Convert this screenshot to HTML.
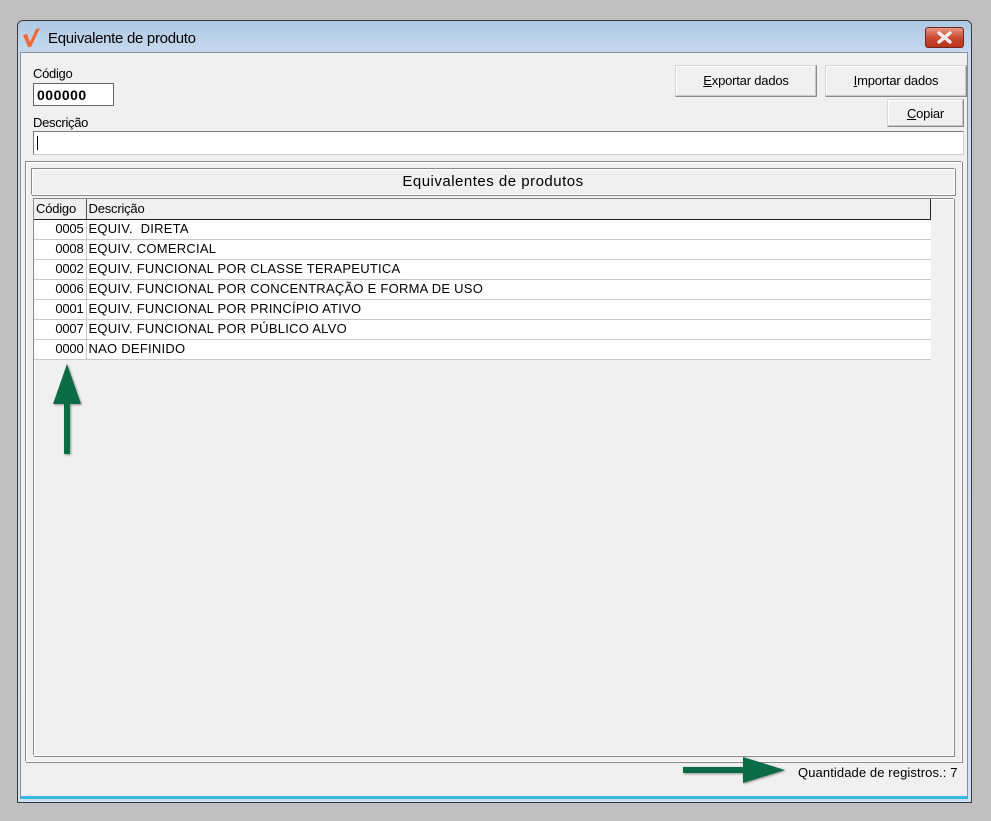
<!DOCTYPE html>
<html><head><meta charset="utf-8">
<style>
*{box-sizing:border-box;margin:0;padding:0}
body{width:991px;height:821px;background:#c0c0c0;font-family:"Liberation Sans",sans-serif;font-size:12px;color:#000;position:relative;overflow:hidden}
.abs{position:absolute}
.win{left:17px;top:20px;width:955px;height:783px;border:1px solid #3a3a3a;border-radius:6px 6px 0 0;background:linear-gradient(#b9cfe6,#c9dcef 30px,#cde0f2);}
.title{left:18px;top:21px;width:953px;height:31px;border-radius:5px 5px 0 0;background:linear-gradient(#afc8e3,#c6daef)}
.client{left:20px;top:52px;width:948px;height:747px;background:#f0f0f0;border:1px solid #8a8f96;border-bottom:3px solid #3ab6dc}
.lbl{font-size:13px;letter-spacing:-0.3px}
.inp{background:#fff;border:1px solid #7a7a7a;border-right-color:#ccc;border-bottom-color:#ccc}
.btn{background:#f0f0f0;border:1px solid #d6d6d6;border-right-color:#8a8a8a;border-bottom-color:#8a8a8a;box-shadow:inset -1px -1px 0 #c8c8c8,inset 1px 1px 0 #fff;font-size:13px;text-align:center;letter-spacing:-0.2px}
.sunk{border:1px solid #8a8a8a;border-right-color:#fff;border-bottom-color:#fff;box-shadow:inset 1px 1px 0 #fff,1px 1px 0 #8a8a8a}
table{border-collapse:collapse;font-size:13px;letter-spacing:0.25px}
td{height:20px;border-bottom:1px solid #c8c8c8;background:#fff;padding:0 2px;white-space:nowrap;line-height:18px}
td.c{width:52px;text-align:right;border-right:1px solid #c8c8c8;letter-spacing:-0.2px}
tr.h td{background:#f0f0f0;border-bottom:1px solid #222;border-right:1px solid #555;letter-spacing:-0.2px}
</style></head><body>
<div class="abs win"></div>
<div class="abs title"></div>
<svg class="abs" style="left:22px;top:27px" width="20" height="22" viewBox="0 0 20 22"><path d="M1 8 L6 20 L9 20 L18 1 L14 2 L8 15 L5 7 Z" fill="#ee6a35"/></svg>
<div class="abs" style="left:48px;top:30px;font-size:15px;letter-spacing:-0.3px">Equivalente de produto</div>
<div class="abs" style="left:925px;top:27px;width:39px;height:21px;border:1px solid #6e2a20;border-radius:3px;background:linear-gradient(#e59a86,#cc4a33 50%,#b8341f);"></div>
<svg class="abs" style="left:936px;top:31px" width="17" height="13" viewBox="0 0 17 13"><path d="M3 2 L14 11 M14 2 L3 11" stroke="#fff" stroke-width="3.2" stroke-linecap="round"/><path d="M3 2 L14 11 M14 2 L3 11" stroke="#ddd" stroke-width="1"/></svg>
<div class="abs client"></div>

<div class="abs lbl" style="left:33px;top:66px">Código</div>
<div class="abs inp" style="left:33px;top:83px;width:81px;height:23px;border:1px solid #666;font-weight:bold;font-size:14px;padding:3px 0 0 3px;letter-spacing:0.5px">000000</div>
<div class="abs lbl" style="left:33px;top:115px">Descrição</div>
<div class="abs inp" style="left:33px;top:131px;width:931px;height:24px"><div style="position:absolute;left:3px;top:4px;width:1px;height:14px;background:#000"></div></div>

<div class="abs btn" style="left:675px;top:65px;width:142px;height:32px;line-height:30px"><u>E</u>xportar dados</div>
<div class="abs btn" style="left:825px;top:65px;width:142px;height:32px;line-height:30px"><u>I</u>mportar dados</div>
<div class="abs btn" style="left:887px;top:99px;width:77px;height:28px;line-height:27px"><u>C</u>opiar</div>

<div class="abs sunk" style="left:25px;top:161px;width:937px;height:601px"></div>
<div class="abs sunk" style="left:31px;top:168px;width:924px;height:27px;text-align:center;font-size:15px;line-height:25px;letter-spacing:0.5px">Equivalentes de produtos</div>
<div class="abs sunk" style="left:33px;top:198px;width:921px;height:558px"></div>
<table class="abs" style="left:34px;top:199px;width:897px">
<tr class="h"><td class="c" style="text-align:left">Código</td><td>Descrição</td></tr>
<tr><td class="c">0005</td><td>EQUIV.&nbsp; DIRETA</td></tr>
<tr><td class="c">0008</td><td>EQUIV. COMERCIAL</td></tr>
<tr><td class="c">0002</td><td>EQUIV. FUNCIONAL POR CLASSE TERAPEUTICA</td></tr>
<tr><td class="c">0006</td><td>EQUIV. FUNCIONAL POR CONCENTRAÇÃO E FORMA DE USO</td></tr>
<tr><td class="c">0001</td><td>EQUIV. FUNCIONAL POR PRINCÍPIO ATIVO</td></tr>
<tr><td class="c">0007</td><td>EQUIV. FUNCIONAL POR PÚBLICO ALVO</td></tr>
<tr><td class="c">0000</td><td>NAO DEFINIDO</td></tr>
</table>
<div class="abs" style="left:930px;top:199px;width:1px;height:20px;background:#222"></div>

<svg class="abs" style="left:50px;top:362px" width="36" height="96" viewBox="0 0 36 96"><path d="M17 2 L31 42 L20 42 L20 92 L14 92 L14 42 L3 42 Z" fill="#0b6a47" style="filter:drop-shadow(1px 1px 1px rgba(0,0,0,.4))"/></svg>
<svg class="abs" style="left:680px;top:756px" width="110" height="32" viewBox="0 0 110 32"><path d="M3 11 L63 11 L63 1 L105 14 L63 27 L63 17 L3 17 Z" fill="#0b6a47" style="filter:drop-shadow(1px 1px 1px rgba(0,0,0,.4))"/></svg>
<div class="abs" style="left:798px;top:765px;font-size:13px;letter-spacing:0.1px">Quantidade de registros.: 7</div>
</body></html>
